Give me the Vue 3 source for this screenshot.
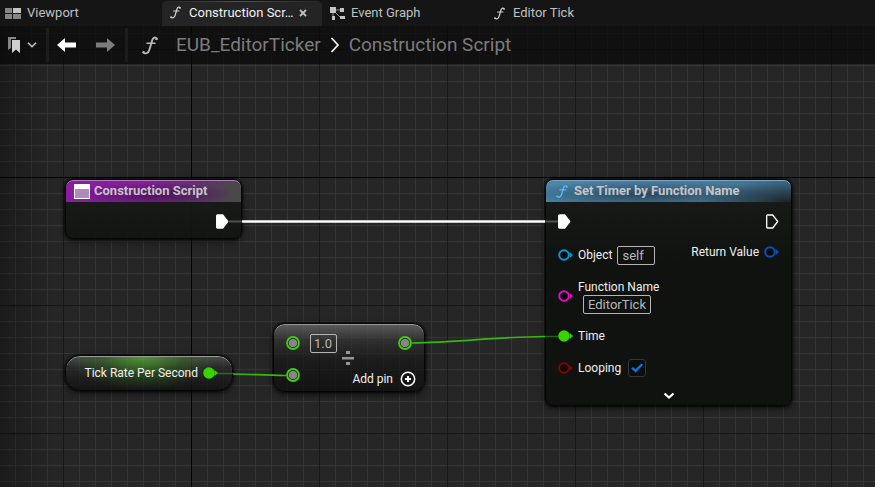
<script setup>
import { ref, h } from 'vue'

const objectRef = ref('self')
const functionName = ref('EditorTick')
const dividend = ref('1.0')
const looping = ref(true)

const FnIcon = () =>
  h('svg', { viewBox: '0 0 16 18', fill: 'none', stroke: 'currentColor', 'stroke-linecap': 'round', 'aria-hidden': 'true' }, [
    h('path', { d: 'M14.8 2.2C13.4.4 11.2.6 10.2 3.8L7.4 13.2C6.4 16.8 3.4 17.8 1.2 16', 'stroke-width': 1.9 }),
    h('path', { d: 'M5 6.8h8', 'stroke-width': 1.5 }),
    h('circle', { cx: 14.5, cy: 2.6, r: 1.2, fill: 'currentColor', stroke: 'none' }),
    h('circle', { cx: 1.6, cy: 15.6, r: 1.2, fill: 'currentColor', stroke: 'none' })
  ])

const ExecPin = (props) =>
  h('svg', { class: 'exec-pin', width: 13, height: 15, viewBox: '0 0 13 15', 'aria-hidden': 'true' }, [
    h('path', {
      d: 'M1.5 1h5.2l5 6.5-5 6.5H1.5a.8.8 0 0 1-.8-.8V1.8A.8.8 0 0 1 1.5 1z',
      fill: props.open ? 'none' : '#fff', stroke: '#fff', 'stroke-width': 1.3, 'stroke-linejoin': 'round'
    })
  ])
ExecPin.props = { open: Boolean }

const DataPin = (props) =>
  h('svg', { class: 'data-pin', width: 15, height: 12, viewBox: '0 0 15 12', 'aria-hidden': 'true' }, [
    h('circle', { cx: 6, cy: 6, r: 4.8, fill: props.filled ? props.color : '#080a08', stroke: props.color, 'stroke-width': 2 }),
    h('path', { d: 'M11.6 3L15 6l-3.4 3z', fill: props.color })
  ])
DataPin.props = { color: String, filled: Boolean }

const RingPin = () =>
  h('svg', { class: 'ring-pin', width: 14, height: 14, viewBox: '0 0 14 14', 'aria-hidden': 'true' }, [
    h('circle', { cx: 7, cy: 7, r: 5.9, fill: '#141414', stroke: '#3bd010', 'stroke-width': 2 }),
    h('circle', { cx: 7, cy: 7, r: 4.3, fill: '#8b8388' })
  ])
</script>

<template>
  <div class="editor">
    <nav class="tabs" aria-label="Open graphs">
      <button class="tab tab-view" type="button">
        <svg width="16" height="11" viewBox="0 0 16 11" aria-hidden="true">
          <path fill="#858585" d="M0 0h7v5H0zM0 6h7v5H0zM8 6h8v5H8z" />
          <path fill="#c4c4c4" d="M8 0h8v5H8z" />
        </svg>
        <span>Viewport</span>
      </button>
      <div class="tab tab-current">
        <button class="tab-label" type="button"><FnIcon class="fn-small" /><span>Construction Scr…</span></button>
        <button class="close" type="button" aria-label="Close tab">
          <svg width="8" height="8" viewBox="0 0 8 8" aria-hidden="true"><path d="M1 1l6 6M7 1L1 7" stroke="#c0c0c0" stroke-width="1.8" /></svg>
        </button>
      </div>
      <button class="tab tab-event" type="button">
        <svg width="15" height="13" viewBox="0 0 15 13" aria-hidden="true">
          <path d="M5 3h6M4 4l7 7M3 5v6" stroke="#8c8c8c" fill="none" />
          <path d="M0 0h6v6H0zM10 1h4v4h-4zM10 9h5v3h-5zM2 9h3v4H2z" fill="#c4c4c4" />
        </svg>
        <span>Event Graph</span>
      </button>
      <button class="tab tab-tick" type="button"><FnIcon class="fn-small" /><span>Editor Tick</span></button>
    </nav>

    <main class="graph">
      <header class="toolbar">
        <button class="tool bookmark" type="button" aria-label="Bookmarks">
          <svg width="12" height="16" viewBox="0 0 12 16" aria-hidden="true">
            <path d="M0 0h8v2H3v9l-3 2z" fill="#858585" />
            <path d="M4 3h8v13l-4-3.500-4 3.500z" fill="#cfcfcf" />
          </svg>
          <svg width="10" height="6" viewBox="0 0 10 6" aria-hidden="true"><path d="M1 .8l4 4 4-4" fill="none" stroke="#c8c8c8" stroke-width="1.500" /></svg>
        </button>
        <div class="history">
          <button class="tool" type="button" aria-label="Back">
            <svg width="19" height="14" viewBox="0 0 19 14" aria-hidden="true"><path d="M0 7l8-7v4.500h11v5H8V14z" fill="#fff" /></svg>
          </button>
          <button class="tool" type="button" aria-label="Forward">
            <svg width="19" height="14" viewBox="0 0 19 14" aria-hidden="true"><path d="M19 7l-8-7v4.500H0v5h11V14z" fill="#7c7c7c" /></svg>
          </button>
        </div>
        <FnIcon class="fn-large" />
        <div class="crumbs">
          <a href="#blueprint">EUB_EditorTicker</a>
          <svg width="10" height="16" viewBox="0 0 10 16" aria-hidden="true"><path d="M1.500 1L8 8l-6.500 7" fill="none" stroke="#f0f0f0" stroke-width="1.800" /></svg>
          <a href="#script">Construction Script</a>
        </div>
      </header>

      <section class="node node-script">
        <h2 class="head head-event">
          <svg width="16" height="15" viewBox="0 0 16 15" aria-hidden="true">
            <path d="M0 0h16v15H0z" fill="#fff" /><path d="M1 5h14v9H1z" fill="#ae8bb8" />
          </svg>
          Construction Script
        </h2>
        <div class="row row-exec row-end"><ExecPin /></div>
      </section>

      <section class="node node-timer">
        <h2 class="head head-function"><FnIcon class="fn-node" />Set Timer by Function Name</h2>
        <div class="row row-exec"><ExecPin /><ExecPin open /></div>
        <div class="row row-values">
          <label class="pin-label"><DataPin color="#0b96d8" />Object<input v-model="objectRef" class="value value-object" type="text" /></label>
          <span class="pin-label return">Return Value<DataPin color="#0a50c0" /></span>
        </div>
        <div class="row row-name">
          <DataPin color="#ec08c8" />
          <label class="stack">Function Name<input v-model="functionName" class="value value-name" type="text" /></label>
        </div>
        <div class="row row-time"><span class="pin-label"><DataPin color="#38d400" filled />Time</span></div>
        <div class="row row-loop">
          <label class="pin-label"><DataPin color="#850404" />Looping<input v-model="looping" class="check" type="checkbox" /></label>
        </div>
        <button class="expand" type="button" aria-label="Show advanced pins">
          <svg width="12" height="8" viewBox="0 0 12 8" aria-hidden="true"><path d="M1.500 1.500L6 5.500l4.500-4" fill="none" stroke="#fff" stroke-width="2.200" /></svg>
        </button>
      </section>

      <section class="node glass node-variable"><span>Tick Rate Per Second</span><DataPin color="#38d400" filled /></section>

      <section class="node glass node-divide">
        <div class="operands">
          <div class="operand"><RingPin /><input v-model="dividend" class="value value-number" type="text" aria-label="Dividend" /></div>
          <div class="operand"><RingPin /></div>
        </div>
        <svg class="divide" width="12" height="14" viewBox="0 0 12 14" aria-hidden="true"><path d="M0 6h12v2.500H0zM4 0h4v3H4zM4 11h4v3H4z" fill="#969696" /></svg>
        <div class="results">
          <RingPin />
          <button class="add" type="button">
            Add pin
            <svg width="16" height="16" viewBox="0 0 16 16" aria-hidden="true">
              <circle cx="8" cy="8" r="6.700" fill="none" stroke="#fff" stroke-width="1.500" /><path d="M8 5v6M5 8h6" stroke="#fff" stroke-width="2" />
            </svg>
          </button>
        </div>
      </section>

      <svg class="wires" aria-hidden="true">
        <path d="M229 195.500H242M544 195.500H558" stroke="#fff" stroke-opacity=".25" stroke-width="2" />
        <path d="M242 195.500H545" stroke="#fff" stroke-width="2.400" />
        <g fill="none" stroke="#34b80e" stroke-width="1.700">
          <path d="M233 348C252 348 262 349.500 286 349.500M412 317C460 316 495 311 545 310.500" />
          <path d="M216 347.500H233M545 310.500H558" stroke-opacity=".5" />
        </g>
      </svg>
    </main>
  </div>
</template>

<style>
body { margin: 0; background: #151515; }
</style>

<style scoped>
.editor {
  display: flex;
  flex-direction: column;
  min-height: 100vh;
  color: #f0f0f0;
  font: 13px/16px Roboto, "Liberation Sans", sans-serif;
}
.editor *, .editor *::after { box-sizing: border-box; }
button { padding: 0; border: 0; background: none; color: inherit; font: inherit; }
svg { display: block; flex: none; }

.tabs { display: flex; height: 26px; background: #151515; color: #c0c0c0; }
.tab { display: flex; align-items: center; gap: 6px; white-space: nowrap; }
.tab-view { width: 162px; padding-left: 5px; }
.tab-current {
  width: 160px;
  margin-top: 1px;
  padding: 0 0 2px 8px;
  border-radius: 5px 5px 0 0;
  background: linear-gradient(90deg, #242424, #0c5fc0 50%, #242424) top / 100% 1px no-repeat #242424;
  color: #f2f2f2;
}
.tab-label { display: flex; align-items: center; gap: 8px; }
.tab-event { width: 172px; padding-left: 8px; }
.tab-tick { gap: 8px; }
.fn-small { width: 11px; height: 13px; color: #d0d0d0; }

.graph {
  position: relative;
  flex: 1;
  min-height: 400px;
  overflow: hidden;
  background:
    linear-gradient(90deg, rgba(0, 0, 0, .3), transparent 60px),
    linear-gradient(#020202, #020202) 0 151px / 100% 1px no-repeat,
    linear-gradient(#020202, #020202) 191px 0 / 1px 100% no-repeat,
    linear-gradient(#171717 1px, transparent 1px) 0 23px / 128px 128px,
    linear-gradient(90deg, #171717 1px, transparent 1px) 63px 0 / 128px 128px,
    linear-gradient(#353535 1px, transparent 1px) 0 7px / 16px 16px,
    linear-gradient(90deg, #353535 1px, transparent 1px) 15px 0 / 16px 16px,
    #262626;
}

.toolbar { display: flex; align-items: center; height: 38px; background: rgba(10, 10, 10, .75); }
.tool { display: flex; align-items: center; }
.bookmark { gap: 7px; width: 49px; height: 34px; padding-left: 8px; border-right: 3px solid #1c1c1c; }
.history { display: flex; align-items: center; gap: 20px; width: 79px; height: 34px; padding-left: 8px; border-right: 3px solid #1c1c1c; }
.fn-large { width: 16px; height: 19px; margin-left: 14px; color: #b8b8b8; }
.crumbs { display: flex; align-items: center; gap: 9px; margin-left: 18px; font-size: 19px; line-height: 24px; }
.crumbs a { color: #7c7c7c; text-decoration: none; white-space: nowrap; }

.node {
  position: absolute;
  border: 1px solid #050505;
  border-radius: 8px;
  background: linear-gradient(rgba(26, 27, 26, .93), rgba(14, 17, 14, .95) 80px);
  box-shadow: 0 0 2px 1px rgba(0, 0, 0, .6), 0 3px 6px rgba(0, 0, 0, .5);
  font-size: 12px;
}
.node-script { left: 65px; top: 153px; width: 177px; height: 60px; }
.node-timer { left: 545px; top: 153px; width: 247px; height: 227px; }
.node-variable { left: 65px; top: 329px; width: 168px; height: 36px; }
.node-divide { left: 273px; top: 297px; width: 152px; height: 69px; }

.head {
  display: flex;
  align-items: center;
  gap: 4px;
  height: 22px;
  margin: 0;
  padding-left: 8px;
  border-radius: 7px 7px 0 0;
  color: #c8c4c8;
  font-size: 13px;
  font-weight: 700;
  white-space: nowrap;
}
.head-event {
  background:
    radial-gradient(ellipse 80px 12px at 50% 65%, rgba(40, 10, 48, .6), transparent),
    linear-gradient(90deg, #8a1ca0, #84209a 45%, #62306c 75%, #4a484a 95%);
  box-shadow: inset 0 1px #b07cbc;
}
.head-function {
  gap: 6px;
  padding-left: 10px;
  background:
    radial-gradient(ellipse 130px 14px at 40% 65%, rgba(16, 32, 44, .6), transparent),
    radial-gradient(ellipse 90px 22px at 100% 100%, rgba(22, 28, 30, .9), transparent),
    linear-gradient(90deg, #4c86aa, #4a80a2 60%, #3f6a86);
  box-shadow: inset 0 1px #78a6c4;
}
.fn-node { width: 12px; height: 13px; color: #5cb8f0; }

.row { display: flex; align-items: center; justify-content: space-between; padding: 0 12px; }
.row-exec { height: 38px; }
.row-end { justify-content: flex-end; }
.row-values { height: 30px; }
.row-name { justify-content: flex-start; gap: 5px; height: 52px; }
.row-time { height: 28px; }
.row-loop { height: 36px; }
.pin-label { display: flex; align-items: center; gap: 5px; }
.return { margin-bottom: 6px; }
.stack { display: flex; flex-direction: column; }

.value {
  height: 19px;
  padding: 0 4px;
  border: 1px solid #b4b4b4;
  border-radius: 2px;
  background: transparent;
  color: #b8b8b8;
  font: inherit;
  font-size: 13px;
}
.value-object { width: 38px; }
.value-name { width: 68px; margin-left: 5px; }
.value-number { width: 27px; padding: 0 3px; }

.check {
  display: grid;
  place-items: center;
  width: 18px;
  height: 18px;
  margin: 0 0 0 2px;
  border: 1px solid #363838;
  border-radius: 3px;
  background: #0c0e0c;
  appearance: none;
}
.check:checked::after {
  content: "";
  width: 12px;
  height: 9px;
  background: #0878f0;
  clip-path: polygon(0 55%, 14% 38%, 36% 65%, 86% 0, 100% 15%, 37% 100%);
}
.expand { display: block; margin: 6px auto 0; }

.glass {
  background: linear-gradient(rgba(110, 110, 110, .75), rgba(50, 50, 50, .7) 25%, rgba(22, 22, 22, .7) 55%, rgba(14, 14, 14, .8));
  box-shadow: inset 0 1px #9a9a9a, 0 0 2px 1px rgba(0, 0, 0, .6), 0 3px 6px rgba(0, 0, 0, .5);
}
.node-variable {
  display: flex;
  align-items: center;
  justify-content: flex-end;
  gap: 5px;
  padding-right: 14px;
  border-radius: 15px;
  background:
    radial-gradient(ellipse 75px 34px at 46% 0, rgba(84, 170, 50, .8), rgba(50, 120, 28, .4) 55%, transparent),
    linear-gradient(rgba(100, 100, 100, .6), rgba(40, 40, 40, .65) 35%, rgba(14, 14, 14, .8));
  white-space: nowrap;
}
.node-divide { display: flex; padding: 0 8px 0 12px; border-radius: 12px; }
.operands { display: flex; flex-direction: column; padding-top: 3px; }
.operand { display: flex; align-items: center; gap: 10px; height: 32px; }
.divide { margin: 27px -8px 0 5px; }
.results { display: flex; flex: 1; flex-direction: column; align-items: flex-end; gap: 21px; padding-top: 12px; }
.results > :first-child { margin-right: 4px; }
.add { display: flex; align-items: center; gap: 7px; white-space: nowrap; }

.wires { position: absolute; inset: 0; width: 100%; height: 100%; pointer-events: none; }
</style>
